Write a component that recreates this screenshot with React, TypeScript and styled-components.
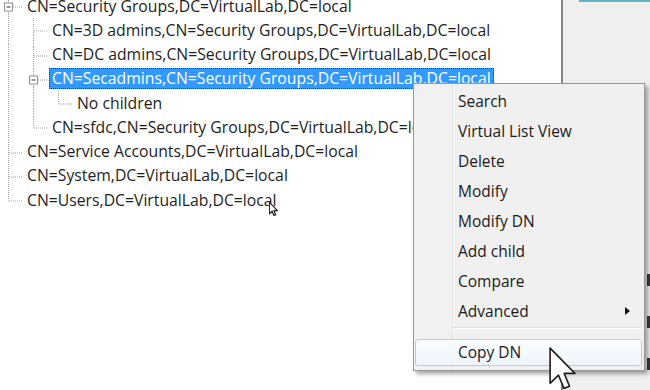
import * as React from 'react'
import styled, { createGlobalStyle } from 'styled-components'

type Cell = 'pipe' | 'blank' | 'tee' | 'elbow'

type TreeNode = {
  label: string
  cells: Cell[]
  open?: boolean
  selected?: boolean
}

const ROW = 24.25

const nodes: TreeNode[] = [
  { label: 'CN=Security Groups,DC=VirtualLab,DC=local', cells: ['tee'], open: true },
  { label: 'CN=3D admins,CN=Security Groups,DC=VirtualLab,DC=local', cells: ['pipe', 'tee'] },
  { label: 'CN=DC admins,CN=Security Groups,DC=VirtualLab,DC=local', cells: ['pipe', 'tee'] },
  { label: 'CN=Secadmins,CN=Security Groups,DC=VirtualLab,DC=local', cells: ['pipe', 'tee'], open: true, selected: true },
  { label: 'No children', cells: ['pipe', 'pipe', 'elbow'] },
  { label: 'CN=sfdc,CN=Security Groups,DC=VirtualLab,DC=local', cells: ['pipe', 'elbow'] },
  { label: 'CN=Service Accounts,DC=VirtualLab,DC=local', cells: ['tee'] },
  { label: 'CN=System,DC=VirtualLab,DC=local', cells: ['tee'] },
  { label: 'CN=Users,DC=VirtualLab,DC=local', cells: ['elbow'] },
]

const menuItems = ['Search', 'Virtual List View', 'Delete', 'Modify', 'Modify DN', 'Add child', 'Compare', 'Advanced']

const GlobalStyle = createGlobalStyle`
  html, body {
    margin: 0;
    width: 650px;
    height: 390px;
    overflow: hidden;
    background: #fff;
  }
  body {
    font-family: "Open Sans", "Noto Sans", sans-serif;
  }
`

// connector lines + expander box for one indent column
const Connector = ({ type, open }: { type: Cell; open?: boolean }) => {
  const mid = 12.5
  return (
    <CellSvg viewBox="0 0 25 24.25" preserveAspectRatio="none">
      <g stroke="#a3a3a3" strokeWidth="1" strokeDasharray="1 1" fill="none">
        {type !== 'blank' && (
          <line x1="8.5" y1="0" x2="8.5" y2={type === 'elbow' ? mid : 24.25} />
        )}
        {(type === 'tee' || type === 'elbow') && <line x1="9" y1={mid + 0.5} x2="22" y2={mid + 0.5} />}
      </g>
      {open && (
        <g>
          <rect x="4.5" y={mid - 3.5} width="8" height="8" fill="#fff" stroke="#8f8f8f" />
          <line x1="6.5" y1={mid + 0.5} x2="10.5" y2={mid + 0.5} stroke="#333" />
        </g>
      )}
    </CellSvg>
  )
}

const Cursor = ({ scale }: { scale: number }) => (
  <svg width={13 * scale} height={20 * scale} viewBox="0 0 13 20">
    <path
      d="M0.5 0.5 V16.5 L4.3 12.8 L6.8 18.8 L9.3 17.8 L6.9 12 H11.8 Z"
      fill="#fff"
      stroke="#222"
      strokeWidth={1 / scale + 0.3}
      strokeLinejoin="round"
    />
  </svg>
)

export default function App() {
  return (
    <>
      <GlobalStyle />
      <Screen>
        <TreePane>
          <Tree>
            {nodes.map((n, i) => (
              <Row key={i}>
                {n.cells.map((c, j) => (
                  <Connector key={j} type={c} open={n.open && j === n.cells.length - 1} />
                ))}
                <Label $selected={n.selected}>{n.label}</Label>
              </Row>
            ))}
          </Tree>
        </TreePane>
        <Divider />
        <SidePane>
          <AccentBar />
          <EdgeMarks>
            <span />
            <span />
            <span />
          </EdgeMarks>
        </SidePane>

        <SmallPointer>
          <Cursor scale={0.72} />
        </SmallPointer>

        <Menu>
          {menuItems.map((m) => (
            <Item key={m}>
              {m}
              {m === 'Advanced' && <SubArrow />}
            </Item>
          ))}
          <Separator />
          <Item $active>Copy DN</Item>
        </Menu>

        <BigPointer>
          <Cursor scale={2.2} />
        </BigPointer>
      </Screen>
    </>
  )
}

const Screen = styled.div`
  position: relative;
  display: flex;
  width: 650px;
  height: 390px;
  overflow: hidden;
`

const TreePane = styled.div`
  width: 561px;
  background: #fff;
  overflow: hidden;
`

const Tree = styled.div`
  margin-top: -6px;
  display: flex;
  flex-direction: column;
`

const Row = styled.div`
  display: flex;
  align-items: center;
  height: ${ROW}px;
  white-space: nowrap;
`

const CellSvg = styled.svg`
  flex: none;
  width: 25px;
  height: ${ROW}px;
  display: block;
`

const Label = styled.span<{ $selected?: boolean }>`
  margin-left: -1px;
  padding: 0 2px;
  height: 19px;
  line-height: 19px;
  font-size: 15.75px;
  color: ${(p) => (p.$selected ? '#fff' : '#1e1e1e')};
  background: ${(p) => (p.$selected ? '#3399ff' : 'transparent')};
  border: 1px ${(p) => (p.$selected ? 'dotted #1a3f73' : 'solid transparent')};
`

const Divider = styled.div`
  width: 2px;
  background: #858585;
`

const SidePane = styled.div`
  flex: 1;
  display: flex;
  flex-direction: column;
  background: #efefef;
`

const AccentBar = styled.div`
  margin-left: 16px;
  height: 2px;
  background: #5fb3c2;
`

const EdgeMarks = styled.div`
  margin: 272px 0 0 auto;
  width: 3px;
  display: flex;
  flex-direction: column;
  gap: 30px;
  span {
    height: 12px;
    background: #3a3a3a;
  }
`

const Menu = styled.div`
  position: absolute;
  left: 413px;
  top: 83px;
  width: 232px;
  box-sizing: border-box;
  display: flex;
  flex-direction: column;
  padding: 2px 0 3px;
  border: 1px solid #979797;
  background: linear-gradient(to right, #f1f1f1 0 38px, #e2e3e3 38px 39px, #fff 39px 40px, #f0f0f0 40px);
  box-shadow: 3px 3px 4px rgba(0, 0, 0, 0.35);
  font-size: 15.5px;
  color: #1b1b1b;
`

const Item = styled.div<{ $active?: boolean }>`
  display: flex;
  align-items: center;
  box-sizing: border-box;
  height: 27px;
  margin: 1.5px 2px 1.5px 1px;
  padding-left: 42px;
  border: 1px solid ${(p) => (p.$active ? '#b4cdec' : 'transparent')};
  border-radius: 3px;
  background: ${(p) => (p.$active ? 'linear-gradient(#fbfdff, #eef4fc)' : 'transparent')};
`

const SubArrow = styled.span`
  margin-left: auto;
  margin-right: 11px;
  width: 0;
  height: 0;
  border-left: 5px solid #111;
  border-top: 4px solid transparent;
  border-bottom: 4px solid transparent;
`

const Separator = styled.div`
  margin: 1px 2px 8px 39px;
  height: 1px;
  background: #e0e0e0;
  border-bottom: 1px solid #fff;
`

const SmallPointer = styled.div`
  position: absolute;
  left: 269px;
  top: 202px;
  line-height: 0;
`

const BigPointer = styled.div`
  position: absolute;
  left: 549px;
  top: 347px;
  line-height: 0;
`
